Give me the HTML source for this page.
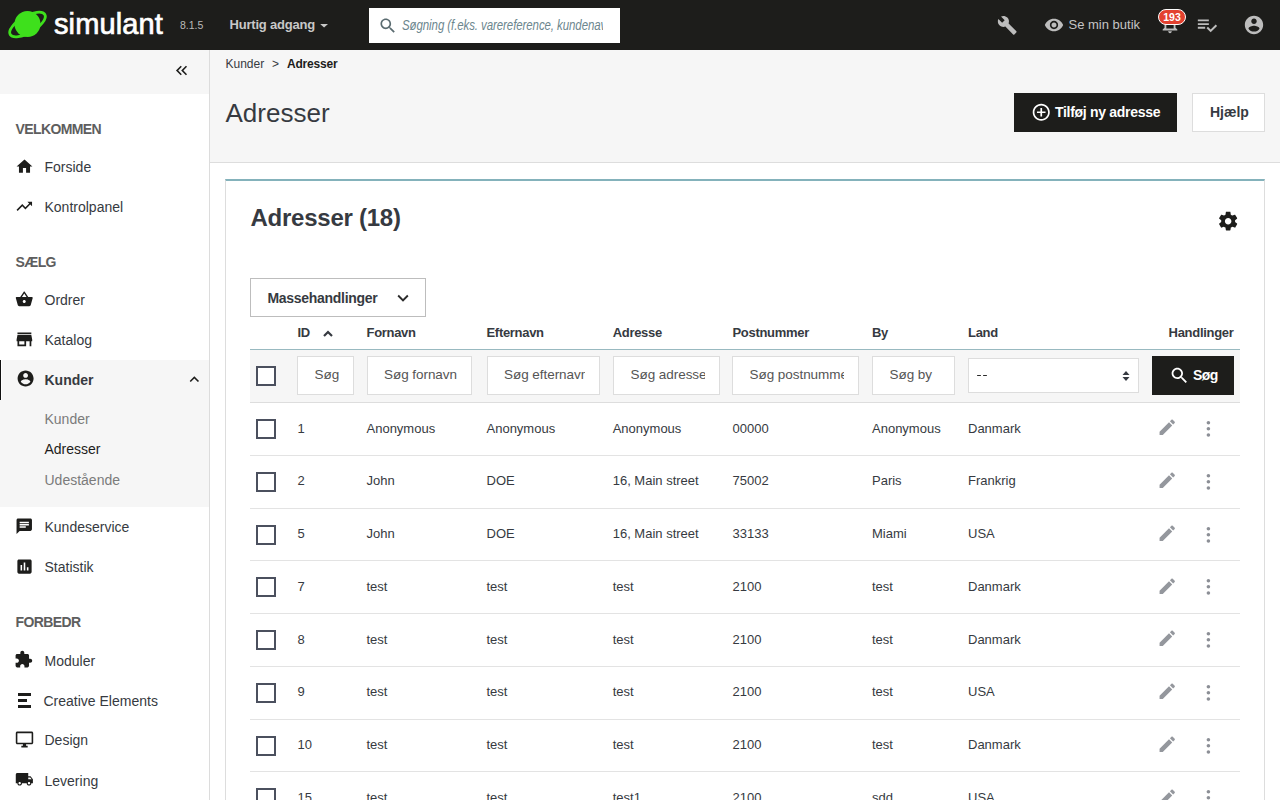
<!DOCTYPE html>
<html lang="da">
<head>
<meta charset="utf-8">
<title>Adresser</title>
<style>
*{box-sizing:border-box;margin:0;padding:0}
html,body{width:1280px;height:800px;overflow:hidden;background:#fff;font-family:"Liberation Sans",sans-serif;color:#363a41}
.a{position:absolute;display:block}
.t{position:absolute;white-space:nowrap}
</style>
</head>
<body>
<div class="a" style="left:0px;top:0px;width:1280px;height:50px;background:#1d1d1b"></div>
<svg class="a" style="left:6px;top:8px" width="44" height="34" viewBox="0 0 44 34"><ellipse cx="21.5" cy="16.5" rx="20" ry="8.3" transform="rotate(-30 21.5 16.5)" fill="none" stroke="#3ee01c" stroke-width="2.8"/><circle cx="21.5" cy="16" r="13" fill="#3ee01c"/></svg>
<div class="t" style="left:54px;top:4.45px;font-size:29px;line-height:41px;color:#ffffff;font-weight:normal;letter-spacing:0.1px;-webkit-text-stroke:0.7px #fff">simulant</div>
<div class="t" style="left:180px;top:17.86px;font-size:10.5px;line-height:15px;color:#bababa;font-weight:normal;">8.1.5</div>
<div class="t" style="left:229.5px;top:15.70px;font-size:13px;line-height:18px;color:#c8c8c8;font-weight:bold;letter-spacing:-0.2px">Hurtig adgang</div>
<svg class="a" style="left:319.6px;top:24.3px" width="8.2" height="3.5" viewBox="0 0 9 4"><path d="M0 0h9L4.5 4z" fill="#c8c8c8"/></svg>
<div class="a" style="left:369px;top:8px;width:251px;height:35px;background:#fff"></div>
<svg class="a" style="left:378.1px;top:15.5px" width="19.7" height="19.7" viewBox="0 0 24 24"><path fill="#5a6b70" d="M15.5 14h-.79l-.28-.27C15.41 12.59 16 11.11 16 9.5 16 5.91 13.09 3 9.5 3S3 5.91 3 9.5 5.91 16 9.5 16c1.61 0 3.09-.59 4.23-1.57l.27.28v.79l5 4.99L20.49 19l-4.99-5zm-6 0C7.01 14 5 11.99 5 9.5S7.010 5 9.5 5 14 7.01 14 9.5 11.99 14 9.5 14z"/></svg>
<div class="a" style="left:402px;top:8px;width:201px;height:35px;overflow:hidden">
<div class="t" style="left:0px;top:6.85px;font-size:14px;line-height:20px;color:#6c868e;font-weight:normal;font-style:italic;letter-spacing:-0.1px;transform:scaleX(0.82);transform-origin:0 0">Søgning (f.eks. varereference, kundenavn)</div>
</div>
<svg class="a" style="left:997px;top:14.7px" width="20.5" height="20.5" viewBox="0 0 24 24"><path fill="#bdbdbd" d="M22.7 19l-9.1-9.1c.9-2.3.4-5-1.5-6.9-2-2-5-2.4-7.4-1.3L9 6 6 9 1.6 4.7C.4 7.1.9 10.1 2.9 12.1c1.9 1.9 4.6 2.4 6.9 1.5l9.1 9.1c.4.4 1 .4 1.4 0l2.3-2.3c.5-.4.5-1.1.1-1.4z"/></svg>
<svg class="a" style="left:1043.6px;top:14.75px" width="20" height="20" viewBox="0 0 24 24"><path fill="#bdbdbd" d="M12 4.5C7 4.5 2.73 7.61 1 12c1.73 4.39 6 7.5 11 7.5s9.27-3.11 11-7.5c-1.73-4.39-6-7.5-11-7.5zM12 17c-2.76 0-5-2.24-5-5s2.24-5 5-5 5 2.24 5 5-2.24 5-5 5zm0-8c-1.66 0-3 1.34-3 3s1.34 3 3 3 3-1.34 3-3-1.34-3-3-3z"/></svg>
<div class="t" style="left:1068.5px;top:15.90px;font-size:13px;line-height:18px;color:#c4c4c4;font-weight:normal;">Se min butik</div>
<svg class="a" style="left:1159px;top:13px" width="22" height="22" viewBox="0 0 24 24"><path fill="#bdbdbd" d="M12 22c1.1 0 2-.9 2-2h-4c0 1.1.89 2 2 2zm6-6v-5c0-3.07-1.64-5.64-4.5-6.32V4c0-.83-.67-1.5-1.5-1.5s-1.5.67-1.5 1.5v.68C7.63 5.36 6 7.92 6 11v5l-2 2v1h16v-1l-2-2zm-2 1H8v-6c0-2.48 1.51-4.5 4-4.5s4 2.02 4 4.5v6z"/></svg>
<div class="a" style="left:1158px;top:9px;width:28px;height:16px;background:#e3412f;border:1.6px solid #fff;border-radius:8px"></div>
<div class="t" style="left:1158px;top:9px;width:28px;height:16px;text-align:center;font-size:10.5px;line-height:16px;font-weight:bold;color:#fff">193</div>
<svg class="a" style="left:1196px;top:13.5px" width="22" height="22" viewBox="0 0 24 24"><path fill="#bdbdbd" d="M14 10H2v2h12v-2zm0-4H2v2h12V6zM2 16h8v-2H2v2zm19.5-4.5L23 13l-6.99 7-4.51-4.5L13 14l3.01 3 5.49-5.5z"/></svg>
<svg class="a" style="left:1242.9px;top:14px" width="22" height="22" viewBox="0 0 24 24"><path fill="#bdbdbd" d="M12 2C6.48 2 2 6.48 2 12s4.48 10 10 10 10-4.48 10-10S17.52 2 12 2zm0 3c1.66 0 3 1.34 3 3s-1.34 3-3 3-3-1.34-3-3 1.34-3 3-3zm0 14.2c-2.5 0-4.71-1.28-6-3.22.03-1.99 4-3.08 6-3.08 1.99 0 5.97 1.09 6 3.08-1.29 1.94-3.5 3.22-6 3.22z"/></svg>
<div class="a" style="left:0px;top:50px;width:209px;height:44px;background:#f6f6f6"></div>
<div class="a" style="left:209px;top:50px;width:1px;height:750px;background:#dcdcdc"></div>
<svg class="a" style="left:172px;top:60.8px" width="19" height="19" viewBox="0 0 24 24"><path fill="#1d1d1b" d="M17.59 18L19 16.59 14.42 12 19 7.41 17.59 6l-6 6zM11 18l1.41-1.41L7.830 12l4.58-4.59L11 6l-6 6z"/></svg>
<div class="a" style="left:0px;top:360px;width:209px;height:147px;background:#f6f6f6"></div>
<div class="a" style="left:0px;top:360px;width:2px;height:40px;background:#fff"></div>
<div class="a" style="left:0px;top:360px;width:1.2px;height:40px;background:#111"></div>
<div class="t" style="left:15.5px;top:119.15px;font-size:14px;line-height:20px;color:#5e5e5e;font-weight:bold;letter-spacing:-0.6px">VELKOMMEN</div>
<div class="t" style="left:44.5px;top:157.15px;font-size:14px;line-height:20px;color:#363a41;font-weight:normal;">Forside</div>
<svg class="a" style="left:15.4px;top:156.6px" width="19" height="19" viewBox="0 0 24 24"><path fill="#1d1d1b" d="M10 20v-6h4v6h5v-8h3L12 3 2 12h3v8z"/></svg>
<div class="t" style="left:44.5px;top:196.65px;font-size:14px;line-height:20px;color:#363a41;font-weight:normal;">Kontrolpanel</div>
<svg class="a" style="left:15.45px;top:197.35px" width="18.6" height="18.6" viewBox="0 0 24 24"><path fill="#1d1d1b" d="M16 6l2.29 2.29-4.88 4.88-4-4L2 16.59 3.41 18l6-6 4 4 6.3-6.29L22 12V6z"/></svg>
<div class="t" style="left:15.5px;top:252.15px;font-size:14px;line-height:20px;color:#5e5e5e;font-weight:bold;letter-spacing:-0.6px">SÆLG</div>
<div class="t" style="left:44.5px;top:290.15px;font-size:14px;line-height:20px;color:#363a41;font-weight:normal;">Ordrer</div>
<svg class="a" style="left:15.2px;top:290.2px" width="18.5" height="18.5" viewBox="0 0 24 24"><path fill="#1d1d1b" d="M17.21 9l-4.38-6.56c-.19-.28-.51-.42-.83-.42-.32 0-.64.14-.83.43L6.79 9H2c-.55 0-1 .45-1 1 0 .09.01.18.04.27l2.54 9.27c.23.84 1 1.46 1.92 1.46h13c.92 0 1.69-.62 1.93-1.46l2.54-9.27L23 10c0-.55-.45-1-1-1h-4.79zM9 9l3-4.4L15 9H9zm3 8c-1.1 0-2-.9-2-2s.9-2 2-2 2 .9 2 2-.9 2-2 2z"/></svg>
<div class="t" style="left:44.5px;top:330.15px;font-size:14px;line-height:20px;color:#363a41;font-weight:normal;">Katalog</div>
<svg class="a" style="left:14.2px;top:328.8px" width="20.8" height="20.8" viewBox="0 0 24 24"><path fill="#1d1d1b" d="M20 4H4v2h16V4zm1 10v-2l-1-5H4l-1 5v2h1v6h10v-6h4v6h2v-6h1zm-9 4H6v-4h6v4z"/></svg>
<div class="t" style="left:44.5px;top:370.15px;font-size:14px;line-height:20px;color:#363a41;font-weight:bold;">Kunder</div>
<svg class="a" style="left:15.9px;top:369.4px" width="19.2" height="19.2" viewBox="0 0 24 24"><path fill="#1d1d1b" d="M12 2C6.48 2 2 6.48 2 12s4.48 10 10 10 10-4.48 10-10S17.52 2 12 2zm0 3c1.66 0 3 1.34 3 3s-1.34 3-3 3-3-1.34-3-3 1.34-3 3-3zm0 14.2c-2.5 0-4.71-1.28-6-3.22.03-1.99 4-3.08 6-3.08 1.99 0 5.97 1.09 6 3.08-1.29 1.94-3.5 3.22-6 3.22z"/></svg>
<svg class="a" style="left:185.3px;top:370.2px" width="18.7" height="18.7" viewBox="0 0 24 24"><path fill="#1d1d1b" d="M12 8l-6 6 1.41 1.41L12 10.83l4.59 4.58L18 14z"/></svg>
<div class="t" style="left:44.5px;top:409.15px;font-size:14px;line-height:20px;color:#7b7b7b;font-weight:normal;">Kunder</div>
<div class="t" style="left:44.5px;top:439.15px;font-size:14px;line-height:20px;color:#1d1d1b;font-weight:normal;">Adresser</div>
<div class="t" style="left:44.5px;top:470.15px;font-size:14px;line-height:20px;color:#7b7b7b;font-weight:normal;">Udestående</div>
<div class="t" style="left:44.5px;top:517.15px;font-size:14px;line-height:20px;color:#363a41;font-weight:normal;">Kundeservice</div>
<svg class="a" style="left:15.06px;top:517px" width="18.5" height="18.5" viewBox="0 0 24 24"><path fill="#1d1d1b" d="M20 2H4c-1.1 0-1.99.9-1.99 2L2 22l4-4h14c1.1 0 2-.9 2-2V4c0-1.1-.9-2-2-2zM6 9h12v2H6V9zm8 5H6v-2h8v2zm4-6H6V6h12v2z"/></svg>
<div class="t" style="left:44.5px;top:557.15px;font-size:14px;line-height:20px;color:#363a41;font-weight:normal;">Statistik</div>
<svg class="a" style="left:15.1px;top:556.6px" width="19" height="19" viewBox="0 0 24 24"><path fill="#1d1d1b" d="M19 3H5c-1.1 0-2 .9-2 2v14c0 1.1.9 2 2 2h14c1.1 0 2-.9 2-2V5c0-1.1-.9-2-2-2zM9 17H7v-7h2v7zm4 0h-2V7h2v10zm4 0h-2v-4h2v4z"/></svg>
<div class="t" style="left:15.5px;top:612.15px;font-size:14px;line-height:20px;color:#5e5e5e;font-weight:bold;letter-spacing:-0.6px">FORBEDR</div>
<div class="t" style="left:44.5px;top:650.65px;font-size:14px;line-height:20px;color:#363a41;font-weight:normal;">Moduler</div>
<svg class="a" style="left:14.4px;top:650.2px" width="19" height="19" viewBox="0 0 24 24"><path fill="#1d1d1b" d="M20.5 11H19V7c0-1.1-.9-2-2-2h-4V3.5C13 2.12 11.88 1 10.5 1S8 2.12 8 3.5V5H4c-1.1 0-1.99.9-1.99 2v3.8H3.5c1.49 0 2.7 1.21 2.7 2.7s-1.21 2.7-2.7 2.7H2V20c0 1.1.9 2 2 2h3.8v-1.5c0-1.49 1.21-2.7 2.7-2.7 1.49 0 2.7 1.21 2.7 2.7V22H17c1.1 0 2-.9 2-2v-4h1.5c1.38 0 2.5-1.12 2.5-2.5S21.88 11 20.5 11z"/></svg>
<div class="a" style="left:18px;top:693px;width:13px;height:2.5px;background:#1d1d1b"></div>
<div class="a" style="left:18px;top:699px;width:8.7px;height:2.5px;background:#1d1d1b"></div>
<div class="a" style="left:18px;top:705px;width:13px;height:2.5px;background:#1d1d1b"></div>
<div class="t" style="left:43.5px;top:690.65px;font-size:14px;line-height:20px;color:#363a41;font-weight:normal;">Creative Elements</div>
<div class="t" style="left:44.5px;top:730.15px;font-size:14px;line-height:20px;color:#363a41;font-weight:normal;">Design</div>
<svg class="a" style="left:14.8px;top:730px" width="19" height="19" viewBox="0 0 24 24"><path fill="#1d1d1b" d="M21 2H3c-1.1 0-2 .9-2 2v12c0 1.1.9 2 2 2h7v2H8v2h8v-2h-2v-2h7c1.1 0 2-.9 2-2V4c0-1.1-.9-2-2-2zm0 14H3V4h18v12z"/></svg>
<div class="t" style="left:44.5px;top:770.65px;font-size:14px;line-height:20px;color:#363a41;font-weight:normal;">Levering</div>
<svg class="a" style="left:15.2px;top:769.9px" width="18.7" height="18.7" viewBox="0 0 24 24"><path fill="#1d1d1b" d="M20 8h-3V4H3c-1.1 0-2 .9-2 2v11h2c0 1.66 1.34 3 3 3s3-1.34 3-3h6c0 1.66 1.34 3 3 3s3-1.34 3-3h2v-5l-3-4zM6 18.5c-.83 0-1.5-.67-1.5-1.5s.67-1.5 1.5-1.5 1.5.67 1.5 1.5-.67 1.5-1.5 1.5zm13.5-9l1.96 2.5H17V9.5h2.5zm-1.5 9c-.83 0-1.5-.67-1.5-1.5s.67-1.5 1.5-1.5 1.5.67 1.5 1.5-.67 1.5-1.5 1.5z"/></svg>
<div class="a" style="left:210px;top:50px;width:1070px;height:112px;background:#f6f6f6"></div>
<div class="a" style="left:210px;top:162px;width:1070px;height:1px;background:#dddddd"></div>
<div class="t" style="left:225.5px;top:55.94px;font-size:12px;line-height:17px;color:#363a41;font-weight:normal;">Kunder</div>
<div class="t" style="left:272px;top:55.94px;font-size:12px;line-height:17px;color:#363a41;font-weight:normal;">&gt;</div>
<div class="t" style="left:287px;top:55.94px;font-size:12px;line-height:17px;color:#1d1d1b;font-weight:bold;letter-spacing:-0.2px">Adresser</div>
<div class="t" style="left:225.5px;top:94.79px;font-size:26px;line-height:36px;color:#363a41;font-weight:normal;">Adresser</div>
<div class="a" style="left:1014px;top:93px;width:163px;height:38.5px;background:#1d1d1b"></div>
<svg class="a" style="left:1030.8px;top:101.6px" width="20.5" height="20.5" viewBox="0 0 24 24"><path fill="#fff" d="M13 7h-2v4H7v2h4v4h2v-4h4v-2h-4V7zm-1-5C6.48 2 2 6.48 2 12s4.48 10 10 10 10-4.48 10-10S17.52 2 12 2zm0 18c-4.41 0-8-3.59-8-8s3.59-8 8-8 8 3.59 8 8-3.59 8-8 8z"/></svg>
<div class="t" style="left:1055px;top:102.35px;font-size:14px;line-height:20px;color:#fff;font-weight:bold;letter-spacing:-0.3px">Tilføj ny adresse</div>
<div class="a" style="left:1192px;top:93px;width:73px;height:38.5px;background:#fff;border:1px solid #dddddd"></div>
<div class="t" style="left:1210px;top:102.35px;font-size:14px;line-height:20px;color:#363a41;font-weight:bold;">Hjælp</div>
<div class="a" style="left:225px;top:179px;width:1040px;height:700px;background:#fff;border:1px solid #dddddd;border-top:2px solid #84b2bb"></div>
<div class="t" style="left:250.5px;top:200.58px;font-size:24px;line-height:34px;color:#363a41;font-weight:bold;letter-spacing:-0.25px">Adresser (18)</div>
<svg class="a" style="left:1216.7px;top:210.2px" width="22.3" height="22.3" viewBox="0 0 24 24"><path fill="#1d1d1b" d="M19.43 12.98c.04-.32.07-.64.07-.98s-.03-.66-.07-.98l2.11-1.65c.19-.15.24-.42.12-.64l-2-3.46c-.12-.22-.39-.3-.61-.22l-2.49 1c-.52-.4-1.08-.73-1.69-.98l-.38-2.65C14.46 2.18 14.25 2 14 2h-4c-.25 0-.46.18-.49.42l-.38 2.65c-.61.25-1.17.59-1.69.98l-2.49-1c-.23-.09-.49 0-.61.22l-2 3.46c-.13.22-.07.49.12.64l2.11 1.65c-.04.32-.07.65-.07.98s.03.66.07.98l-2.11 1.65c-.19.15-.24.42-.12.64l2 3.46c.12.22.39.3.61.22l2.49-1c.52.4 1.08.73 1.69.98l.38 2.65c.03.24.24.42.49.42h4c.25 0 .46-.18.49-.42l.38-2.65c.61-.25 1.17-.59 1.69-.98l2.49 1c.23.09.49 0 .61-.22l2-3.46c.12-.22.07-.49-.12-.64l-2.11-1.65zM12 15.5c-1.93 0-3.5-1.57-3.5-3.5s1.57-3.5 3.5-3.5 3.5 1.57 3.5 3.5-1.57 3.5-3.5 3.5z"/></svg>
<div class="a" style="left:250px;top:278px;width:176px;height:39px;background:#fff;border:1px solid #bdbdbd"></div>
<div class="t" style="left:267.5px;top:287.55px;font-size:14px;line-height:20px;color:#363a41;font-weight:bold;letter-spacing:-0.3px">Massehandlinger</div>
<svg class="a" style="left:391.5px;top:287.2px" width="22" height="22" viewBox="0 0 24 24"><path fill="#2b2b2b" d="M16.59 8.59L12 13.17 7.41 8.59 6 10l6 6 6-6z"/></svg>
<div class="t" style="left:297.5px;top:323.50px;font-size:13px;line-height:18px;color:#363a41;font-weight:bold;letter-spacing:-0.3px">ID</div>
<div class="t" style="left:366.5px;top:323.50px;font-size:13px;line-height:18px;color:#363a41;font-weight:bold;letter-spacing:-0.3px">Fornavn</div>
<div class="t" style="left:486.5px;top:323.50px;font-size:13px;line-height:18px;color:#363a41;font-weight:bold;letter-spacing:-0.3px">Efternavn</div>
<div class="t" style="left:612.7px;top:323.50px;font-size:13px;line-height:18px;color:#363a41;font-weight:bold;letter-spacing:-0.3px">Adresse</div>
<div class="t" style="left:732.5px;top:323.50px;font-size:13px;line-height:18px;color:#363a41;font-weight:bold;letter-spacing:-0.3px">Postnummer</div>
<div class="t" style="left:872px;top:323.50px;font-size:13px;line-height:18px;color:#363a41;font-weight:bold;letter-spacing:-0.3px">By</div>
<div class="t" style="left:968px;top:323.50px;font-size:13px;line-height:18px;color:#363a41;font-weight:bold;letter-spacing:-0.3px">Land</div>
<div class="t" style="left:1100px;top:323.50px;width:133.5px;text-align:right;font-size:13px;line-height:18px;color:#363a41;font-weight:bold;letter-spacing:-0.3px">Handlinger</div>
<svg class="a" style="left:322px;top:329px" width="12" height="9" viewBox="0 0 12 9"><path d="M2 7L6 3l4 4" fill="none" stroke="#363a41" stroke-width="2.2"/></svg>
<div class="a" style="left:250px;top:349px;width:990px;height:1px;background:#98b9c0"></div>
<div class="a" style="left:250px;top:350px;width:990px;height:52px;background:#f6f6f6"></div>
<div class="a" style="left:250px;top:402px;width:990px;height:1px;background:#dddddd"></div>
<div class="a" style="left:256px;top:366px;width:20px;height:20px;background:#fff;border:2px solid #4b505e"></div>
<div class="a" style="left:297px;top:356px;width:57px;height:39px;background:#fff;border:1px solid #dddddd;overflow:hidden">
<div class="a" style="left:16.5px;top:0;width:24.5px;height:37px;overflow:hidden">
<div class="t" style="left:0px;top:8.42px;font-size:13.5px;line-height:19px;color:#555555;font-weight:normal;letter-spacing:-0.05px">Søg</div>
</div></div>
<div class="a" style="left:366.5px;top:356px;width:105.5px;height:39px;background:#fff;border:1px solid #dddddd;overflow:hidden">
<div class="a" style="left:16.5px;top:0;width:73.0px;height:37px;overflow:hidden">
<div class="t" style="left:0px;top:8.42px;font-size:13.5px;line-height:19px;color:#555555;font-weight:normal;letter-spacing:-0.05px">Søg fornavn</div>
</div></div>
<div class="a" style="left:486.5px;top:356px;width:113.5px;height:39px;background:#fff;border:1px solid #dddddd;overflow:hidden">
<div class="a" style="left:16.5px;top:0;width:81.0px;height:37px;overflow:hidden">
<div class="t" style="left:0px;top:8.42px;font-size:13.5px;line-height:19px;color:#555555;font-weight:normal;letter-spacing:-0.05px">Søg efternavn</div>
</div></div>
<div class="a" style="left:613px;top:356px;width:107px;height:39px;background:#fff;border:1px solid #dddddd;overflow:hidden">
<div class="a" style="left:16.5px;top:0;width:74.5px;height:37px;overflow:hidden">
<div class="t" style="left:0px;top:8.42px;font-size:13.5px;line-height:19px;color:#555555;font-weight:normal;letter-spacing:-0.05px">Søg adresse</div>
</div></div>
<div class="a" style="left:732px;top:356px;width:127px;height:39px;background:#fff;border:1px solid #dddddd;overflow:hidden">
<div class="a" style="left:16.5px;top:0;width:94.5px;height:37px;overflow:hidden">
<div class="t" style="left:0px;top:8.42px;font-size:13.5px;line-height:19px;color:#555555;font-weight:normal;letter-spacing:-0.05px">Søg postnummer</div>
</div></div>
<div class="a" style="left:872px;top:356px;width:83px;height:39px;background:#fff;border:1px solid #dddddd;overflow:hidden">
<div class="a" style="left:16.5px;top:0;width:50.5px;height:37px;overflow:hidden">
<div class="t" style="left:0px;top:8.42px;font-size:13.5px;line-height:19px;color:#555555;font-weight:normal;letter-spacing:-0.05px">Søg by</div>
</div></div>
<div class="a" style="left:968px;top:358px;width:171px;height:35px;background:#fff;border:1px solid #dddddd"></div>
<div class="a" style="left:977px;top:374.6px;width:4px;height:1.6px;background:#2a2a2a;border-radius:1px"></div>
<div class="a" style="left:982.6px;top:374.6px;width:4px;height:1.6px;background:#2a2a2a;border-radius:1px"></div>
<svg class="a" style="left:1122px;top:370px" width="8" height="12" viewBox="0 0 8 12"><path d="M4 1L7.5 5h-7zM4 11L7.5 7h-7z" fill="#363a41"/></svg>
<div class="a" style="left:1152px;top:356px;width:82px;height:39px;background:#1d1d1b"></div>
<svg class="a" style="left:1169px;top:365px" width="21" height="21" viewBox="0 0 24 24"><path fill="#fff" d="M15.5 14h-.79l-.28-.27C15.41 12.59 16 11.11 16 9.5 16 5.91 13.09 3 9.5 3S3 5.91 3 9.5 5.91 16 9.5 16c1.61 0 3.09-.59 4.23-1.57l.27.28v.79l5 4.99L20.49 19l-4.99-5zm-6 0C7.01 14 5 11.99 5 9.5S7.010 5 9.5 5 14 7.01 14 9.5 11.99 14 9.5 14z"/></svg>
<div class="t" style="left:1193px;top:365.15px;font-size:14px;line-height:20px;color:#fff;font-weight:bold;letter-spacing:-0.6px">Søg</div>
<div class="a" style="left:256px;top:419.0px;width:20px;height:20px;background:#fff;border:2px solid #4b505e"></div>
<div class="t" style="left:297.5px;top:419.70px;font-size:13px;line-height:18px;color:#363a41;font-weight:normal;">1</div>
<div class="t" style="left:366.5px;top:419.70px;font-size:13px;line-height:18px;color:#363a41;font-weight:normal;">Anonymous</div>
<div class="t" style="left:486.5px;top:419.70px;font-size:13px;line-height:18px;color:#363a41;font-weight:normal;">Anonymous</div>
<div class="t" style="left:612.7px;top:419.70px;font-size:13px;line-height:18px;color:#363a41;font-weight:normal;">Anonymous</div>
<div class="t" style="left:732.5px;top:419.70px;font-size:13px;line-height:18px;color:#363a41;font-weight:normal;">00000</div>
<div class="t" style="left:872px;top:419.70px;font-size:13px;line-height:18px;color:#363a41;font-weight:normal;">Anonymous</div>
<div class="t" style="left:968px;top:419.70px;font-size:13px;line-height:18px;color:#363a41;font-weight:normal;">Danmark</div>
<svg class="a" style="left:1157.1px;top:417.4px" width="20.5" height="20.5" viewBox="0 0 24 24"><path fill="#94979d" d="M3 17.25V21h3.75L17.81 9.94l-3.75-3.75L3 17.25zM20.71 7.04c.39-.39.39-1.02 0-1.41l-2.34-2.34c-.39-.39-1.02-.39-1.41 0l-1.83 1.83 3.75 3.75 1.83-1.83z"/></svg>
<svg class="a" style="left:1204px;top:420.00px" width="9" height="18" viewBox="0 0 9 18"><circle cx="4.4" cy="2.8" r="1.8" fill="#8c8f96"/><circle cx="4.4" cy="8.75" r="1.8" fill="#8c8f96"/><circle cx="4.4" cy="15" r="1.8" fill="#8c8f96"/></svg>
<div class="a" style="left:250px;top:454.75px;width:990px;height:1px;background:#e3e3e3"></div>
<div class="a" style="left:256px;top:471.75px;width:20px;height:20px;background:#fff;border:2px solid #4b505e"></div>
<div class="t" style="left:297.5px;top:472.45px;font-size:13px;line-height:18px;color:#363a41;font-weight:normal;">2</div>
<div class="t" style="left:366.5px;top:472.45px;font-size:13px;line-height:18px;color:#363a41;font-weight:normal;">John</div>
<div class="t" style="left:486.5px;top:472.45px;font-size:13px;line-height:18px;color:#363a41;font-weight:normal;">DOE</div>
<div class="t" style="left:612.7px;top:472.45px;font-size:13px;line-height:18px;color:#363a41;font-weight:normal;">16, Main street</div>
<div class="t" style="left:732.5px;top:472.45px;font-size:13px;line-height:18px;color:#363a41;font-weight:normal;">75002</div>
<div class="t" style="left:872px;top:472.45px;font-size:13px;line-height:18px;color:#363a41;font-weight:normal;">Paris</div>
<div class="t" style="left:968px;top:472.45px;font-size:13px;line-height:18px;color:#363a41;font-weight:normal;">Frankrig</div>
<svg class="a" style="left:1157.1px;top:470.15px" width="20.5" height="20.5" viewBox="0 0 24 24"><path fill="#94979d" d="M3 17.25V21h3.75L17.81 9.94l-3.75-3.75L3 17.25zM20.71 7.04c.39-.39.39-1.02 0-1.41l-2.34-2.34c-.39-.39-1.02-.39-1.41 0l-1.83 1.83 3.75 3.75 1.83-1.83z"/></svg>
<svg class="a" style="left:1204px;top:472.75px" width="9" height="18" viewBox="0 0 9 18"><circle cx="4.4" cy="2.8" r="1.8" fill="#8c8f96"/><circle cx="4.4" cy="8.75" r="1.8" fill="#8c8f96"/><circle cx="4.4" cy="15" r="1.8" fill="#8c8f96"/></svg>
<div class="a" style="left:250px;top:507.5px;width:990px;height:1px;background:#e3e3e3"></div>
<div class="a" style="left:256px;top:524.5px;width:20px;height:20px;background:#fff;border:2px solid #4b505e"></div>
<div class="t" style="left:297.5px;top:525.20px;font-size:13px;line-height:18px;color:#363a41;font-weight:normal;">5</div>
<div class="t" style="left:366.5px;top:525.20px;font-size:13px;line-height:18px;color:#363a41;font-weight:normal;">John</div>
<div class="t" style="left:486.5px;top:525.20px;font-size:13px;line-height:18px;color:#363a41;font-weight:normal;">DOE</div>
<div class="t" style="left:612.7px;top:525.20px;font-size:13px;line-height:18px;color:#363a41;font-weight:normal;">16, Main street</div>
<div class="t" style="left:732.5px;top:525.20px;font-size:13px;line-height:18px;color:#363a41;font-weight:normal;">33133</div>
<div class="t" style="left:872px;top:525.20px;font-size:13px;line-height:18px;color:#363a41;font-weight:normal;">Miami</div>
<div class="t" style="left:968px;top:525.20px;font-size:13px;line-height:18px;color:#363a41;font-weight:normal;">USA</div>
<svg class="a" style="left:1157.1px;top:522.9px" width="20.5" height="20.5" viewBox="0 0 24 24"><path fill="#94979d" d="M3 17.25V21h3.75L17.81 9.94l-3.75-3.75L3 17.25zM20.71 7.04c.39-.39.39-1.02 0-1.41l-2.34-2.34c-.39-.39-1.02-.39-1.41 0l-1.83 1.83 3.75 3.75 1.83-1.83z"/></svg>
<svg class="a" style="left:1204px;top:525.50px" width="9" height="18" viewBox="0 0 9 18"><circle cx="4.4" cy="2.8" r="1.8" fill="#8c8f96"/><circle cx="4.4" cy="8.75" r="1.8" fill="#8c8f96"/><circle cx="4.4" cy="15" r="1.8" fill="#8c8f96"/></svg>
<div class="a" style="left:250px;top:560.25px;width:990px;height:1px;background:#e3e3e3"></div>
<div class="a" style="left:256px;top:577.25px;width:20px;height:20px;background:#fff;border:2px solid #4b505e"></div>
<div class="t" style="left:297.5px;top:577.95px;font-size:13px;line-height:18px;color:#363a41;font-weight:normal;">7</div>
<div class="t" style="left:366.5px;top:577.95px;font-size:13px;line-height:18px;color:#363a41;font-weight:normal;">test</div>
<div class="t" style="left:486.5px;top:577.95px;font-size:13px;line-height:18px;color:#363a41;font-weight:normal;">test</div>
<div class="t" style="left:612.7px;top:577.95px;font-size:13px;line-height:18px;color:#363a41;font-weight:normal;">test</div>
<div class="t" style="left:732.5px;top:577.95px;font-size:13px;line-height:18px;color:#363a41;font-weight:normal;">2100</div>
<div class="t" style="left:872px;top:577.95px;font-size:13px;line-height:18px;color:#363a41;font-weight:normal;">test</div>
<div class="t" style="left:968px;top:577.95px;font-size:13px;line-height:18px;color:#363a41;font-weight:normal;">Danmark</div>
<svg class="a" style="left:1157.1px;top:575.65px" width="20.5" height="20.5" viewBox="0 0 24 24"><path fill="#94979d" d="M3 17.25V21h3.75L17.81 9.94l-3.75-3.75L3 17.25zM20.71 7.04c.39-.39.39-1.02 0-1.41l-2.34-2.34c-.39-.39-1.02-.39-1.41 0l-1.83 1.83 3.75 3.75 1.83-1.83z"/></svg>
<svg class="a" style="left:1204px;top:578.25px" width="9" height="18" viewBox="0 0 9 18"><circle cx="4.4" cy="2.8" r="1.8" fill="#8c8f96"/><circle cx="4.4" cy="8.75" r="1.8" fill="#8c8f96"/><circle cx="4.4" cy="15" r="1.8" fill="#8c8f96"/></svg>
<div class="a" style="left:250px;top:613.0px;width:990px;height:1px;background:#e3e3e3"></div>
<div class="a" style="left:256px;top:630.0px;width:20px;height:20px;background:#fff;border:2px solid #4b505e"></div>
<div class="t" style="left:297.5px;top:630.70px;font-size:13px;line-height:18px;color:#363a41;font-weight:normal;">8</div>
<div class="t" style="left:366.5px;top:630.70px;font-size:13px;line-height:18px;color:#363a41;font-weight:normal;">test</div>
<div class="t" style="left:486.5px;top:630.70px;font-size:13px;line-height:18px;color:#363a41;font-weight:normal;">test</div>
<div class="t" style="left:612.7px;top:630.70px;font-size:13px;line-height:18px;color:#363a41;font-weight:normal;">test</div>
<div class="t" style="left:732.5px;top:630.70px;font-size:13px;line-height:18px;color:#363a41;font-weight:normal;">2100</div>
<div class="t" style="left:872px;top:630.70px;font-size:13px;line-height:18px;color:#363a41;font-weight:normal;">test</div>
<div class="t" style="left:968px;top:630.70px;font-size:13px;line-height:18px;color:#363a41;font-weight:normal;">Danmark</div>
<svg class="a" style="left:1157.1px;top:628.4px" width="20.5" height="20.5" viewBox="0 0 24 24"><path fill="#94979d" d="M3 17.25V21h3.75L17.81 9.94l-3.75-3.75L3 17.25zM20.71 7.04c.39-.39.39-1.02 0-1.41l-2.34-2.34c-.39-.39-1.02-.39-1.41 0l-1.83 1.83 3.75 3.75 1.83-1.83z"/></svg>
<svg class="a" style="left:1204px;top:631.00px" width="9" height="18" viewBox="0 0 9 18"><circle cx="4.4" cy="2.8" r="1.8" fill="#8c8f96"/><circle cx="4.4" cy="8.75" r="1.8" fill="#8c8f96"/><circle cx="4.4" cy="15" r="1.8" fill="#8c8f96"/></svg>
<div class="a" style="left:250px;top:665.75px;width:990px;height:1px;background:#e3e3e3"></div>
<div class="a" style="left:256px;top:682.75px;width:20px;height:20px;background:#fff;border:2px solid #4b505e"></div>
<div class="t" style="left:297.5px;top:683.45px;font-size:13px;line-height:18px;color:#363a41;font-weight:normal;">9</div>
<div class="t" style="left:366.5px;top:683.45px;font-size:13px;line-height:18px;color:#363a41;font-weight:normal;">test</div>
<div class="t" style="left:486.5px;top:683.45px;font-size:13px;line-height:18px;color:#363a41;font-weight:normal;">test</div>
<div class="t" style="left:612.7px;top:683.45px;font-size:13px;line-height:18px;color:#363a41;font-weight:normal;">test</div>
<div class="t" style="left:732.5px;top:683.45px;font-size:13px;line-height:18px;color:#363a41;font-weight:normal;">2100</div>
<div class="t" style="left:872px;top:683.45px;font-size:13px;line-height:18px;color:#363a41;font-weight:normal;">test</div>
<div class="t" style="left:968px;top:683.45px;font-size:13px;line-height:18px;color:#363a41;font-weight:normal;">USA</div>
<svg class="a" style="left:1157.1px;top:681.15px" width="20.5" height="20.5" viewBox="0 0 24 24"><path fill="#94979d" d="M3 17.25V21h3.75L17.81 9.94l-3.75-3.75L3 17.25zM20.71 7.04c.39-.39.39-1.02 0-1.41l-2.34-2.34c-.39-.39-1.02-.39-1.41 0l-1.83 1.83 3.75 3.75 1.83-1.83z"/></svg>
<svg class="a" style="left:1204px;top:683.75px" width="9" height="18" viewBox="0 0 9 18"><circle cx="4.4" cy="2.8" r="1.8" fill="#8c8f96"/><circle cx="4.4" cy="8.75" r="1.8" fill="#8c8f96"/><circle cx="4.4" cy="15" r="1.8" fill="#8c8f96"/></svg>
<div class="a" style="left:250px;top:718.5px;width:990px;height:1px;background:#e3e3e3"></div>
<div class="a" style="left:256px;top:735.5px;width:20px;height:20px;background:#fff;border:2px solid #4b505e"></div>
<div class="t" style="left:297.5px;top:736.20px;font-size:13px;line-height:18px;color:#363a41;font-weight:normal;">10</div>
<div class="t" style="left:366.5px;top:736.20px;font-size:13px;line-height:18px;color:#363a41;font-weight:normal;">test</div>
<div class="t" style="left:486.5px;top:736.20px;font-size:13px;line-height:18px;color:#363a41;font-weight:normal;">test</div>
<div class="t" style="left:612.7px;top:736.20px;font-size:13px;line-height:18px;color:#363a41;font-weight:normal;">test</div>
<div class="t" style="left:732.5px;top:736.20px;font-size:13px;line-height:18px;color:#363a41;font-weight:normal;">2100</div>
<div class="t" style="left:872px;top:736.20px;font-size:13px;line-height:18px;color:#363a41;font-weight:normal;">test</div>
<div class="t" style="left:968px;top:736.20px;font-size:13px;line-height:18px;color:#363a41;font-weight:normal;">Danmark</div>
<svg class="a" style="left:1157.1px;top:733.9px" width="20.5" height="20.5" viewBox="0 0 24 24"><path fill="#94979d" d="M3 17.25V21h3.75L17.81 9.94l-3.75-3.75L3 17.25zM20.71 7.04c.39-.39.39-1.02 0-1.41l-2.34-2.34c-.39-.39-1.02-.39-1.41 0l-1.83 1.83 3.75 3.75 1.83-1.83z"/></svg>
<svg class="a" style="left:1204px;top:736.50px" width="9" height="18" viewBox="0 0 9 18"><circle cx="4.4" cy="2.8" r="1.8" fill="#8c8f96"/><circle cx="4.4" cy="8.75" r="1.8" fill="#8c8f96"/><circle cx="4.4" cy="15" r="1.8" fill="#8c8f96"/></svg>
<div class="a" style="left:250px;top:771.25px;width:990px;height:1px;background:#e3e3e3"></div>
<div class="a" style="left:256px;top:788.25px;width:20px;height:20px;background:#fff;border:2px solid #4b505e"></div>
<div class="t" style="left:297.5px;top:788.95px;font-size:13px;line-height:18px;color:#363a41;font-weight:normal;">15</div>
<div class="t" style="left:366.5px;top:788.95px;font-size:13px;line-height:18px;color:#363a41;font-weight:normal;">test</div>
<div class="t" style="left:486.5px;top:788.95px;font-size:13px;line-height:18px;color:#363a41;font-weight:normal;">test</div>
<div class="t" style="left:612.7px;top:788.95px;font-size:13px;line-height:18px;color:#363a41;font-weight:normal;">test1</div>
<div class="t" style="left:732.5px;top:788.95px;font-size:13px;line-height:18px;color:#363a41;font-weight:normal;">2100</div>
<div class="t" style="left:872px;top:788.95px;font-size:13px;line-height:18px;color:#363a41;font-weight:normal;">sdd</div>
<div class="t" style="left:968px;top:788.95px;font-size:13px;line-height:18px;color:#363a41;font-weight:normal;">USA</div>
<svg class="a" style="left:1157.1px;top:786.65px" width="20.5" height="20.5" viewBox="0 0 24 24"><path fill="#94979d" d="M3 17.25V21h3.75L17.81 9.94l-3.75-3.75L3 17.25zM20.71 7.04c.39-.39.39-1.02 0-1.41l-2.34-2.34c-.39-.39-1.02-.39-1.41 0l-1.83 1.83 3.75 3.75 1.83-1.83z"/></svg>
<svg class="a" style="left:1204px;top:789.25px" width="9" height="18" viewBox="0 0 9 18"><circle cx="4.4" cy="2.8" r="1.8" fill="#8c8f96"/><circle cx="4.4" cy="8.75" r="1.8" fill="#8c8f96"/><circle cx="4.4" cy="15" r="1.8" fill="#8c8f96"/></svg>
<div class="a" style="left:250px;top:824.0px;width:990px;height:1px;background:#e3e3e3"></div>
</body></html>
